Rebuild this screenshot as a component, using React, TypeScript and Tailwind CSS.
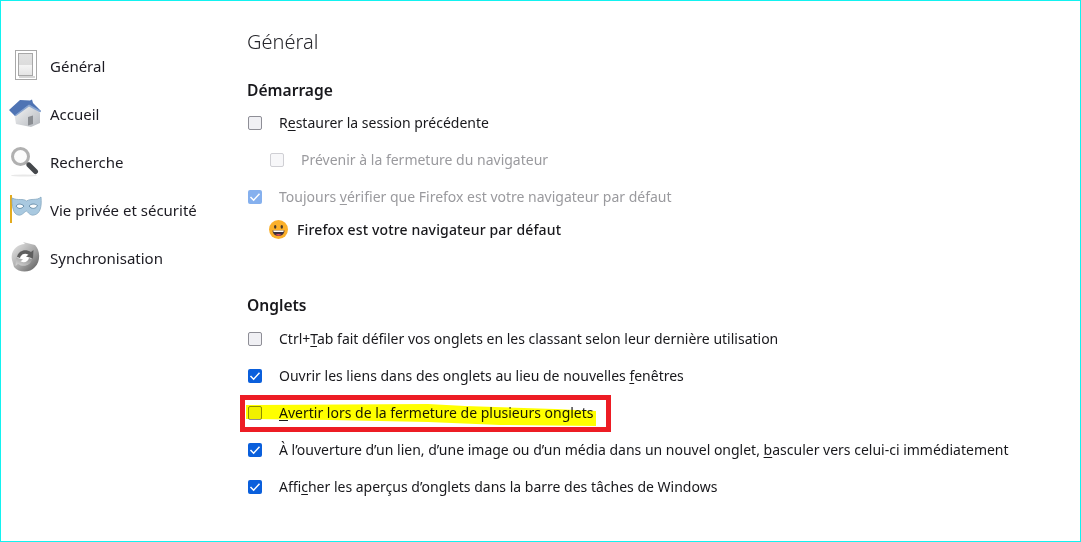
const FONT = "font-['Noto_Sans','Open_Sans',sans-serif]";

const GeneralIcon = () => (
  <svg width="24" height="32" viewBox="0 0 24 32">
    <defs>
      <linearGradient id="sw" x1="0" y1="0" x2="0" y2="1">
        <stop offset="0" stopColor="#e2e2e2" />
        <stop offset="0.5" stopColor="#dcdcdc" />
        <stop offset="0.54" stopColor="#f4f4f4" />
        <stop offset="1" stopColor="#e4e4e4" />
      </linearGradient>
    </defs>
    <rect x="0.5" y="0.5" width="21" height="29" fill="#fff" stroke="#a8a8a8" />
    <rect x="3.5" y="3.5" width="14" height="22" fill="url(#sw)" stroke="#a8a8a8" />
    <rect x="4" y="26" width="16" height="2" fill="#d6d6d6" />
  </svg>
);

const HomeIcon = () => (
  <svg width="34" height="30" viewBox="0 0 34 30">
    <defs>
      <linearGradient id="wall" x1="0" y1="0" x2="1" y2="1">
        <stop offset="0" stopColor="#f8f8f8" />
        <stop offset="1" stopColor="#b4b8be" />
      </linearGradient>
    </defs>
    <path d="M5 13 L19 5 L31 14 L31 24 L22 28 L7 25 Z" fill="url(#wall)" />
    <path d="M0 11 L11 1 L21 1.5 L23 0.5 L24 4 L32 12 L31 13 L20 6 L6 17 Z" fill="#4f74b4" />
    <path d="M20 5.5 L32 12 L31 13.5 L20 7.5 L7 17 L6 16 Z" fill="#8aa6d0" />
    <path d="M19 18 L24 16.5 L24 25 L19 26.5 Z" fill="#8a8d92" />
  </svg>
);

const SearchIcon = () => (
  <svg width="30" height="30" viewBox="0 0 30 30">
    <ellipse cx="15" cy="28.5" rx="13" ry="1" fill="#e8e8e8" />
    <circle cx="11.5" cy="9.5" r="8" fill="#fbfbfb" stroke="#b0b0b0" strokeWidth="3" />
    <path d="M17.5 15.5 L20 18" stroke="#9a9a9a" strokeWidth="3" />
    <path d="M20 18 L26.5 24.5" stroke="#45484c" strokeWidth="5" strokeLinecap="round" />
  </svg>
);

const PrivacyIcon = () => (
  <svg width="33" height="30" viewBox="0 0 33 30">
    <rect x="1" y="0" width="2" height="28" fill="#e3ab1e" />
    <path d="M3 3 C9 6 14 3 17.5 6 C22 3 28 6 32 2 C33 12 31 19 25 20 C21 21 19 17 17.5 16 C15 17 13 21 9 20 C4 19 3 11 3 3 Z" fill="#a9c9e0" stroke="#86a8c0" strokeWidth="0.8" />
    <path d="M7 11 C9 8.5 12 8.5 15 11 C13 14 9 14.5 7 11 Z" fill="#fafcfd" stroke="#5f87a4" strokeWidth="0.9" />
    <path d="M20 11 C22 8.5 26 8.5 28.5 10.5 C27 14 22.5 14.5 20 11 Z" fill="#fafcfd" stroke="#5f87a4" strokeWidth="0.9" />
  </svg>
);

const SyncIcon = () => (
  <svg width="32" height="32" viewBox="0 0 32 32">
    <defs>
      <linearGradient id="sy" x1="0" y1="0" x2="1" y2="1">
        <stop offset="0" stopColor="#ececec" />
        <stop offset="0.55" stopColor="#a6a6a6" />
        <stop offset="1" stopColor="#565656" />
      </linearGradient>
      <linearGradient id="sz" x1="1" y1="0" x2="0" y2="1">
        <stop offset="0" stopColor="#8c8c8c" />
        <stop offset="1" stopColor="#d8d8d8" />
      </linearGradient>
    </defs>
    <path d="M3 18 C1 9 8 2 16 2 L14 0 L26 3 C31 8 32 19 26 25 C21 31 10 31 5 25 Z" fill="url(#sy)" />
    <circle cx="15.5" cy="16" r="7" fill="#fff" />
    <path d="M8 15 C9 9 16 6 22 10 L24.5 8 L24 16.5 L17 14.5 L19.5 12.8 C15.5 10.5 12 12.5 11 16 Z" fill="#5e5e5e" />
    <path d="M23 17 C22 23 15 26 9 22 L6.5 24 L7 15.5 L14 17.5 L11.5 19.2 C15.5 21.5 19 19.5 20 16 Z" fill="url(#sz)" />
  </svg>
);

const navItems = [
  { label: "Général", icon: <GeneralIcon />, cls: "pl-[6px]" },
  { label: "Accueil", icon: <HomeIcon />, cls: "" },
  { label: "Recherche", icon: <SearchIcon />, cls: "" },
  { label: "Vie privée et sécurité", icon: <PrivacyIcon />, cls: "" },
  { label: "Synchronisation", icon: <SyncIcon />, cls: "" },
];

const Checkbox = ({ checked, dim }: { checked?: boolean; dim?: boolean }) => {
  if (checked) {
    return (
      <span className={`w-[14px] h-[14px] rounded-[2px] shrink-0 flex items-center justify-center ${dim ? "bg-[#85b0ee]" : "bg-[#0a5fdc]"}`}>
        <svg width="12" height="12" viewBox="0 0 12 12" fill="none">
          <path d="M1.5 6 L4.6 9.2 L10.5 2.8" stroke="#fff" strokeWidth="1.5" />
        </svg>
      </span>
    );
  }
  return (
    <span className={`w-[14px] h-[14px] rounded-[2px] shrink-0 border ${dim ? "border-[#cfcfd4] bg-[#f7f7f9]" : "border-[#8e8e96] bg-[#f0f0f4]"}`} />
  );
};

const Row = ({ checked, dim, children }: { checked?: boolean; dim?: boolean; children: React.ReactNode }) => (
  <div className={`h-[37px] flex items-center pl-[1px] gap-[17px] text-[14px] ${dim ? "text-[#9a9a9e]" : "text-[#18181c]"}`}>
    <Checkbox checked={checked} dim={dim} />
    <span className="whitespace-nowrap">{children}</span>
  </div>
);

const Key = ({ children }: { children: string }) => <span className="underline underline-offset-2">{children}</span>;

export default function App() {
  return (
    <div className={`w-[1081px] h-[542px] bg-white border border-[#12f2f0] overflow-hidden flex ${FONT}`}>
      <nav className="w-[246px] shrink-0 pt-[41px] pl-[8px]">
        {navItems.map((item) => (
          <div key={item.label} className="h-[48px] flex items-center text-[15px] text-[#1c1b22]">
            <span className={`w-[41px] shrink-0 flex items-center ${item.cls}`}>{item.icon}</span>
            <span className="whitespace-nowrap">{item.label}</span>
          </div>
        ))}
      </nav>

      <main className="flex-1 pt-[25px]">
        <h1 className="text-[20px] font-light leading-[32px] text-[#26262b]">Général</h1>
        <h2 className="mt-[16px] text-[15.6px] leading-[32px] font-semibold text-[#18181c]">Démarrage</h2>
        <div className="-mt-[2px]">
          <Row>R<Key>e</Key>staurer la session précédente</Row>
          <div className="pl-[22px]">
            <Row dim>Prévenir à la fermeture du navigateur</Row>
          </div>
          <Row checked dim>Toujours <Key>v</Key>érifier que Firefox est votre navigateur par défaut</Row>
          <div className="h-[29px] flex items-center pl-[22px] gap-[9px] text-[14px] font-medium text-[#18181c] tracking-[0.15px]">
            <svg width="19" height="19" viewBox="0 0 19 19" className="shrink-0">
              <circle cx="9.5" cy="9.5" r="9.5" fill="#fbb02a" />
              <ellipse cx="6.2" cy="6.8" rx="1.2" ry="1.9" fill="#4a3a2a" />
              <ellipse cx="12.8" cy="6.8" rx="1.2" ry="1.9" fill="#4a3a2a" />
              <path d="M3.5 10.5 H15.5 C15 14.5 12.5 16 9.5 16 C6.5 16 4 14.5 3.5 10.5 Z" fill="#3f3140" />
              <path d="M4.3 10.5 H14.7 L14.4 12 H4.6 Z" fill="#fff" />
              <path d="M6.5 15 C8 13.5 11 13.5 12.5 15 C11 16 8 16 6.5 15 Z" fill="#e8505b" />
            </svg>
            <span className="whitespace-nowrap">Firefox est votre navigateur par défaut</span>
          </div>
        </div>

        <h2 className="mt-[45px] text-[15.6px] leading-[32px] font-semibold text-[#18181c]">Onglets</h2>
        <div className="-mt-[1px]">
          <Row>Ctrl+<Key>T</Key>ab fait défiler vos onglets en les classant selon leur dernière utilisation</Row>
          <Row checked>Ouvrir les liens dans des onglets au lieu de nouvelles <Key>f</Key>enêtres</Row>
          <div className="relative">
            <Row><Key>A</Key>vertir lors de la fermeture de plusieurs onglets</Row>
            {/* yellow marker stroke and red box drawn over the row */}
            <svg width="372" height="38" viewBox="0 0 372 38" className="absolute left-[-6px] top-[0px] pointer-events-none mix-blend-multiply">
              <path d="M5 11 L187 10 L224 12 L314 15 L355 17 L355 32 L259 31 L187 28 L89 26 L5 25 Z" fill="#ffff00" />
            </svg>
            <div className="absolute left-[-7px] top-[1px] w-[371px] h-[37px] border-[5px] border-[#ed1c24] pointer-events-none" />
          </div>
          <Row checked>À l’ouverture d’un lien, d’une image ou d’un média dans un nouvel onglet, <Key>b</Key>asculer vers celui-ci immédiatement</Row>
          <Row checked>Affi<Key>c</Key>her les aperçus d’onglets dans la barre des tâches de Windows</Row>
        </div>
      </main>
    </div>
  );
}
